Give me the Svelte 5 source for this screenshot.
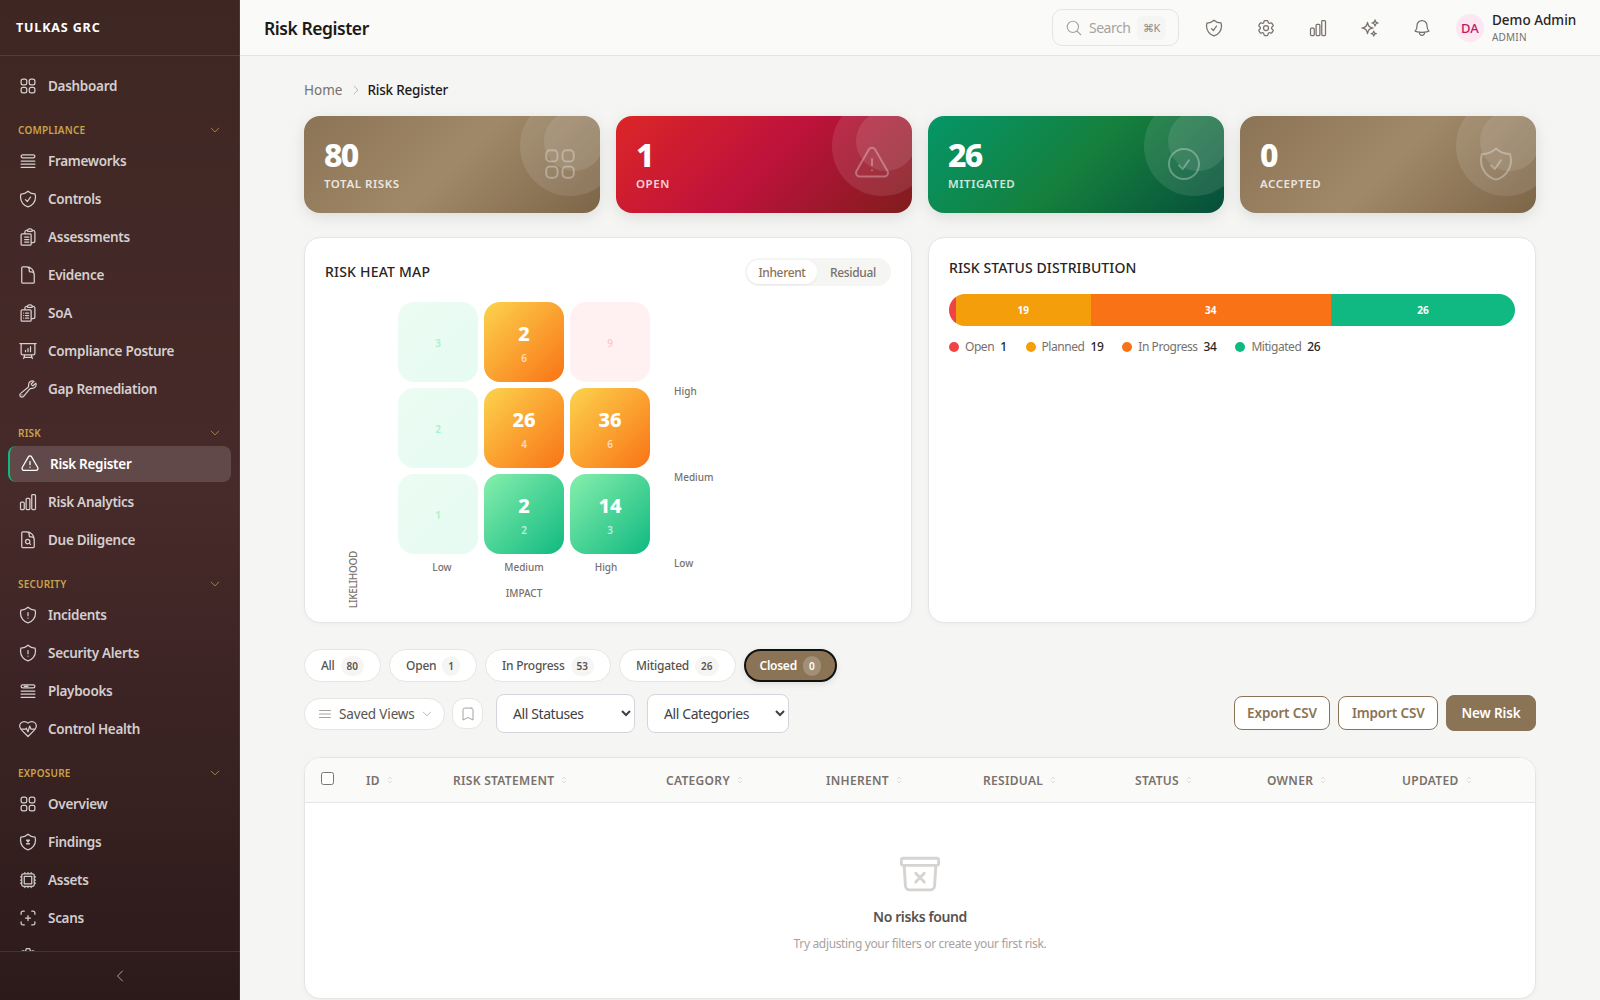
<script>
  const P = {
    squares: 'M3.75 6A2.25 2.25 0 0 1 6 3.75h2.25A2.25 2.25 0 0 1 10.5 6v2.25a2.25 2.25 0 0 1-2.25 2.25H6a2.25 2.25 0 0 1-2.25-2.25V6ZM3.75 15.75A2.25 2.25 0 0 1 6 13.5h2.25a2.25 2.25 0 0 1 2.25 2.25V18a2.25 2.25 0 0 1-2.25 2.25H6A2.25 2.25 0 0 1 3.75 18v-2.25ZM13.5 6a2.25 2.25 0 0 1 2.25-2.25H18A2.25 2.25 0 0 1 20.25 6v2.25A2.25 2.25 0 0 1 18 10.5h-2.25a2.25 2.25 0 0 1-2.25-2.25V6ZM13.5 15.75a2.25 2.25 0 0 1 2.25-2.25H18a2.25 2.25 0 0 1 2.25 2.25V18A2.25 2.25 0 0 1 18 20.25h-2.25A2.25 2.25 0 0 1 13.5 18v-2.25Z',
    queue: 'M3.75 12h16.5m-16.5 3.75h16.5M3.75 19.5h16.5M5.625 4.5h12.75a1.875 1.875 0 0 1 0 3.75H5.625a1.875 1.875 0 0 1 0-3.75Z',
    playbook: 'M3.75 12h16.5m-16.5 3.75h16.5M3.75 19.5h16.5M5.625 4.5h12.75a1.875 1.875 0 0 1 0 3.75H5.625a1.875 1.875 0 0 1 0-3.75ZM7.5 6.4h4.5',
    shieldCheck: 'M9 12.75 11.25 15 15 9.75m-3-7.036A11.959 11.959 0 0 1 3.598 6 11.99 11.99 0 0 0 3 9.749c0 5.592 3.824 10.29 9 11.623 5.176-1.332 9-6.03 9-11.622 0-1.31-.21-2.571-.598-3.751h-.152c-3.196 0-6.1-1.248-8.25-3.285Z',
    clipLines: 'M8 12h5M8 15h5M8 18h5m2.75.75H18a2.25 2.25 0 0 0 2.25-2.25V6.108c0-1.135-.845-2.098-1.976-2.192a48.424 48.424 0 0 0-1.123-.08m-5.801 0c-.065.21-.1.433-.1.664 0 .414.336.75.75.75h4.5a.75.75 0 0 0 .75-.75 2.25 2.25 0 0 0-.1-.664m-5.8 0A2.251 2.251 0 0 1 13.5 2.25H15c1.012 0 1.867.668 2.15 1.586m-5.8 0c-.376.023-.75.05-1.124.08C9.095 4.01 8.25 4.973 8.25 6.108V8.25m0 0H4.875c-.621 0-1.125.504-1.125 1.125v11.25c0 .621.504 1.125 1.125 1.125h9.75c.621 0 1.125-.504 1.125-1.125V9.375c0-.621-.504-1.125-1.125-1.125H8.25Z',
    clipList: 'M9 12h3.75M9 15h3.75M9 18h3.75m3 .75H18a2.25 2.25 0 0 0 2.25-2.25V6.108c0-1.135-.845-2.098-1.976-2.192a48.424 48.424 0 0 0-1.123-.08m-5.801 0c-.065.21-.1.433-.1.664 0 .414.336.75.75.75h4.5a.75.75 0 0 0 .75-.75 2.25 2.25 0 0 0-.1-.664m-5.8 0A2.251 2.251 0 0 1 13.5 2.25H15c1.012 0 1.867.668 2.15 1.586m-5.8 0c-.376.023-.75.05-1.124.08C9.095 4.01 8.25 4.973 8.25 6.108V8.25m0 0H4.875c-.621 0-1.125.504-1.125 1.125v11.25c0 .621.504 1.125 1.125 1.125h9.75c.621 0 1.125-.504 1.125-1.125V9.375c0-.621-.504-1.125-1.125-1.125H8.25ZM6.75 12h.008v.008H6.75V12Zm0 3h.008v.008H6.75V15Zm0 3h.008v.008H6.75V18Z',
    document: 'M19.5 14.25v-2.625a3.375 3.375 0 0 0-3.375-3.375h-1.5A1.125 1.125 0 0 1 13.5 7.125v-1.5a3.375 3.375 0 0 0-3.375-3.375H8.25m2.25 0H5.625c-.621 0-1.125.504-1.125 1.125v17.25c0 .621.504 1.125 1.125 1.125h12.75c.621 0 1.125-.504 1.125-1.125V11.25a9 9 0 0 0-9-9Z',
    presentation: 'M3.75 3v11.25A2.25 2.25 0 0 0 6 16.5h2.25M3.75 3h-1.5m1.5 0h16.5m0 0h1.5m-1.5 0v11.25A2.25 2.25 0 0 1 18 16.5h-2.25m-7.5 0h7.5m-7.5 0-1 3m8.5-3 1 3m0 0 .5 1.5m-.5-1.5h-9.5m0 0-.5 1.5M9 11.25v1.5M12 9v3.75m3-6v6',
    wrench: 'M21.75 6.75a4.5 4.5 0 0 1-4.884 4.484c-1.076-.091-2.264.071-2.95.904l-7.152 8.684a2.548 2.548 0 1 1-3.586-3.586l8.684-7.152c.833-.686.995-1.874.904-2.95a4.5 4.5 0 0 1 6.336-4.486l-3.276 3.276a3.004 3.004 0 0 0 2.25 2.25l3.276-3.276c.256.565.398 1.192.398 1.852ZM4.867 19.125h.008v.008h-.008v-.008Z',
    triangle: 'M12 9v3.75m-9.303 3.376c-.866 1.5.217 3.374 1.948 3.374h14.71c1.73 0 2.813-1.874 1.948-3.374L13.949 3.378c-.866-1.5-3.032-1.5-3.898 0L2.697 16.126ZM12 15.75h.007v.008H12v-.008Z',
    chart: 'M3 13.125C3 12.504 3.504 12 4.125 12h2.25c.621 0 1.125.504 1.125 1.125v6.75C7.5 20.496 6.996 21 6.375 21h-2.25A1.125 1.125 0 0 1 3 19.875v-6.75ZM9.75 8.625c0-.621.504-1.125 1.125-1.125h2.25c.621 0 1.125.504 1.125 1.125v11.25c0 .621-.504 1.125-1.125 1.125h-2.25a1.125 1.125 0 0 1-1.125-1.125V8.625ZM16.5 4.125c0-.621.504-1.125 1.125-1.125h2.25C20.496 3 21 3.504 21 4.125v15.75c0 .621-.504 1.125-1.125 1.125h-2.25a1.125 1.125 0 0 1-1.125-1.125V4.125Z',
    docSearch: 'M19.5 14.25v-2.625a3.375 3.375 0 0 0-3.375-3.375h-1.5A1.125 1.125 0 0 1 13.5 7.125v-1.5a3.375 3.375 0 0 0-3.375-3.375H8.25m5.231 13.481L15 17.25m-4.5-15H5.625c-.621 0-1.125.504-1.125 1.125v16.5c0 .621.504 1.125 1.125 1.125h12.75c.621 0 1.125-.504 1.125-1.125V11.25a9 9 0 0 0-9-9Zm3.75 11.625a2.625 2.625 0 1 1-5.25 0 2.625 2.625 0 0 1 5.25 0Z',
    shieldExcl: 'M12 9v3.75m0-10.036A11.959 11.959 0 0 1 3.598 6 11.99 11.99 0 0 0 3 9.75c0 5.592 3.824 10.29 9 11.622 5.176-1.332 9-6.03 9-11.622 0-1.31-.21-2.57-.598-3.75h-.152c-3.196 0-6.1-1.25-8.25-3.286Zm0 13.036h.008v.008H12v-.008Z',
    heartPulse: 'M19 14c1.49-1.46 3-3.21 3-5.5A5.5 5.5 0 0 0 16.5 3c-1.76 0-3 .5-4.5 2-1.5-1.5-2.74-2-4.5-2A5.5 5.5 0 0 0 2 8.5c0 2.3 1.5 4.05 3 5.5l7 7ZM3.22 12H9.5l.5-1 2 4.5 2-7 1.5 3.5h5.27',
    shieldBug: 'M12 2.714A11.959 11.959 0 0 1 3.598 6 11.99 11.99 0 0 0 3 9.75c0 5.592 3.824 10.29 9 11.622 5.176-1.332 9-6.03 9-11.622 0-1.31-.21-2.57-.598-3.75h-.152c-3.196 0-6.1-1.25-8.25-3.286ZM10.2 9.8h3.6M10.2 14.2h3.6M10.2 9.8l3.6 4.4M13.8 9.8l-3.6 4.4',
    cpu: 'M8.25 3v1.5M4.5 8.25H3m18 0h-1.5M4.5 12H3m18 0h-1.5m-15 3.75H3m18 0h-1.5M8.25 19.5V21M12 3v1.5m0 15V21m3.75-18v1.5m0 15V21m-9-1.5h10.5a2.25 2.25 0 0 0 2.25-2.25V6.75a2.25 2.25 0 0 0-2.25-2.25H6.75A2.25 2.25 0 0 0 4.5 6.75v10.5a2.25 2.25 0 0 0 2.25 2.25Zm.75-12h9v9h-9v-9Z',
    scan: 'M7.5 3.75H6A2.25 2.25 0 0 0 3.75 6v1.5M16.5 3.75H18A2.25 2.25 0 0 1 20.25 6v1.5m0 9V18A2.25 2.25 0 0 1 18 20.25h-1.5m-9 0H6A2.25 2.25 0 0 1 3.75 18v-1.5M15 12H9m3-3v6',
    cog: 'M9.594 3.94c.09-.542.56-.94 1.11-.94h2.593c.55 0 1.02.398 1.11.94l.213 1.281c.063.374.313.686.645.87.074.04.147.083.22.127.325.196.72.257 1.075.124l1.217-.456a1.125 1.125 0 0 1 1.37.49l1.296 2.247a1.125 1.125 0 0 1-.26 1.431l-1.003.827c-.293.241-.438.613-.43.992a7.723 7.723 0 0 1 0 .255c-.008.378.137.75.43.991l1.004.827c.424.35.534.955.26 1.43l-1.298 2.247a1.125 1.125 0 0 1-1.369.491l-1.217-.456c-.355-.133-.75-.072-1.076.124a6.47 6.47 0 0 1-.22.128c-.331.183-.581.495-.644.869l-.213 1.281c-.09.543-.56.94-1.11.94h-2.594c-.55 0-1.019-.398-1.11-.94l-.213-1.281c-.062-.374-.312-.686-.644-.87a6.52 6.52 0 0 1-.22-.127c-.325-.196-.72-.257-1.076-.124l-1.217.456a1.125 1.125 0 0 1-1.369-.49l-1.297-2.247a1.125 1.125 0 0 1 .26-1.431l1.004-.827c.292-.24.437-.613.43-.991a6.932 6.932 0 0 1 0-.255c.007-.38-.138-.751-.43-.992l-1.004-.827a1.125 1.125 0 0 1-.26-1.43l1.297-2.247a1.125 1.125 0 0 1 1.37-.491l1.216.456c.356.133.751.072 1.076-.124.072-.044.146-.086.22-.128.332-.183.582-.495.644-.869l.214-1.28ZM15 12a3 3 0 1 1-6 0 3 3 0 0 1 6 0Z',
    sparkles: 'M9.813 15.904 9 18.75l-.813-2.846a4.5 4.5 0 0 0-3.09-3.09L2.25 12l2.846-.813a4.5 4.5 0 0 0 3.09-3.09L9 5.25l.813 2.846a4.5 4.5 0 0 0 3.09 3.09L15.75 12l-2.846.813a4.5 4.5 0 0 0-3.09 3.09ZM18.259 8.715 18 9.75l-.259-1.035a3.375 3.375 0 0 0-2.455-2.456L14.25 6l1.036-.259a3.375 3.375 0 0 0 2.455-2.456L18 2.25l.259 1.035a3.375 3.375 0 0 0 2.456 2.456L21.75 6l-1.035.259a3.375 3.375 0 0 0-2.456 2.456ZM16.894 20.567 16.5 21.75l-.394-1.183a2.25 2.25 0 0 0-1.423-1.423L13.5 18.75l1.183-.394a2.25 2.25 0 0 0 1.423-1.423l.394-1.183.394 1.183a2.25 2.25 0 0 0 1.423 1.423l1.183.394-1.183.394a2.25 2.25 0 0 0-1.423 1.423Z',
    bell: 'M14.857 17.082a23.848 23.848 0 0 0 5.454-1.31A8.967 8.967 0 0 1 18 9.75V9A6 6 0 0 0 6 9v.75a8.967 8.967 0 0 1-2.312 6.022c1.733.64 3.56 1.085 5.455 1.31m5.714 0a24.255 24.255 0 0 1-5.714 0m5.714 0a3 3 0 1 1-5.714 0',
    search: 'm21 21-5.197-5.197m0 0A7.5 7.5 0 1 0 5.196 5.196a7.5 7.5 0 0 0 10.607 10.607Z',
    checkCircle: 'M9 12.75 11.25 15 15 9.75M21 12a9 9 0 1 1-18 0 9 9 0 0 1 18 0Z',
    archiveX: 'm20.25 7.5-.625 10.632a2.25 2.25 0 0 1-2.247 2.118H6.622a2.25 2.25 0 0 1-2.247-2.118L3.75 7.5m6 4.125 2.25 2.25m0 0 2.25 2.25M12 13.875l2.25-2.25M12 13.875l-2.25 2.25M3.375 7.5h17.25c.621 0 1.125-.504 1.125-1.125v-1.5c0-.621-.504-1.125-1.125-1.125H3.375c-.621 0-1.125.504-1.125 1.125v1.5c0 .621.504 1.125 1.125 1.125Z',
    bookmark: 'M17.593 3.322c1.1.128 1.907 1.077 1.907 2.185V21L12 17.25 4.5 21V5.507c0-1.108.806-2.057 1.907-2.185a48.507 48.507 0 0 1 11.186 0Z',
    bars: 'M3.75 6.75h16.5M3.75 12h16.5m-16.5 5.25h16.5',
    down: 'm19.5 8.25-7.5 7.5-7.5-7.5',
    left: 'M15.75 19.5 8.25 12l7.5-7.5',
    right: 'm8.25 4.5 7.5 7.5-7.5 7.5',
    updown: 'M8.25 15 12 18.75 15.75 15m-7.5-6L12 5.25 15.75 9'
  };

  const nav = [
    { items: [{ t: 'Dashboard', i: 'squares' }] },
    { title: 'Compliance', items: [
      { t: 'Frameworks', i: 'queue' }, { t: 'Controls', i: 'shieldCheck' }, { t: 'Assessments', i: 'clipLines' },
      { t: 'Evidence', i: 'document' }, { t: 'SoA', i: 'clipList' }, { t: 'Compliance Posture', i: 'presentation' },
      { t: 'Gap Remediation', i: 'wrench' } ] },
    { title: 'Risk', items: [
      { t: 'Risk Register', i: 'triangle', active: true }, { t: 'Risk Analytics', i: 'chart' }, { t: 'Due Diligence', i: 'docSearch' } ] },
    { title: 'Security', items: [
      { t: 'Incidents', i: 'shieldExcl' }, { t: 'Security Alerts', i: 'shieldExcl' }, { t: 'Playbooks', i: 'playbook' }, { t: 'Control Health', i: 'heartPulse' } ] },
    { title: 'Exposure', items: [
      { t: 'Overview', i: 'squares' }, { t: 'Findings', i: 'shieldBug' }, { t: 'Assets', i: 'cpu' }, { t: 'Scans', i: 'scan' }, { t: '', i: 'cog' } ] }
  ];

  const stats = [
    { n: 80, l: 'Total Risks', c: 'brown', i: 'squares' },
    { n: 1, l: 'Open', c: 'red', i: 'triangle' },
    { n: 26, l: 'Mitigated', c: 'green', i: 'checkCircle' },
    { n: 0, l: 'Accepted', c: 'brown', i: 'shieldCheck' }
  ];

  const cells = [
    { k: 'fade-g', s: 3 }, { k: 'orange', b: 2, s: 6 }, { k: 'fade-r', s: 9 },
    { k: 'fade-g', s: 2 }, { k: 'orange', b: 26, s: 4 }, { k: 'orange', b: 36, s: 6 },
    { k: 'fade-g', s: 1 }, { k: 'green', b: 2, s: 2 }, { k: 'green', b: 14, s: 3 }
  ];

  const segs = [
    { v: 1, c: '#ef4444', l: 'Open' },
    { v: 19, c: '#f59e0b', l: 'Planned' },
    { v: 34, c: '#f97316', l: 'In Progress' },
    { v: 26, c: '#10b981', l: 'Mitigated' }
  ];

  const pills = [
    { l: 'All', n: 80 }, { l: 'Open', n: 1 }, { l: 'In Progress', n: 53 }, { l: 'Mitigated', n: 26 }, { l: 'Closed', n: 0, on: true }
  ];

  const cols = ['ID', 'Risk Statement', 'Category', 'Inherent', 'Residual', 'Status', 'Owner', 'Updated'];
</script>

{#snippet icon(name, size = 20, sw = 1.5)}
  <svg class="ic" width={size} height={size} viewBox="0 0 24 24" fill="none" stroke="currentColor" stroke-width={sw} stroke-linecap="round" stroke-linejoin="round" aria-hidden="true"><path d={P[name]} /></svg>
{/snippet}

<div class="app">
  <aside class="side">
    <div class="brand">TULKAS GRC</div>
    <nav class="nav">
      {#each nav as g}
        {#if g.title}
          <div class="sec"><span>{g.title}</span>{@render icon('down', 12)}</div>
        {/if}
        {#each g.items as it}
          <div class="item" class:active={it.active}>
            {@render icon(it.i, 20)}
            {#if it.t}<span>{it.t}</span>{/if}
          </div>
        {/each}
      {/each}
    </nav>
    <div class="collapse">{@render icon('left', 16)}</div>
  </aside>

  <div class="col">
    <header class="top">
      <h1>Risk Register</h1>
      <div class="search">
        {@render icon('search', 18)}
        <span class="s-t">Search</span>
        <span class="kbd">⌘K</span>
      </div>
      <div class="tools">
        {#each ['shieldCheck', 'cog', 'chart', 'sparkles', 'bell'] as t}
          <span class="tool">{@render icon(t, 20)}</span>
        {/each}
      </div>
      <div class="user">
        <span class="avatar">DA</span>
        <div class="who"><b>Demo Admin</b><small>ADMIN</small></div>
      </div>
    </header>

    <main class="main">
      <div class="crumb"><span>Home</span>{@render icon('right', 12)}<b>Risk Register</b></div>

      <section class="stats">
        {#each stats as s}
          <div class="stat {s.c}">
            <div class="num">{s.n}</div>
            <div class="lab">{s.l}</div>
            <span class="si">{@render icon(s.i, 40, 1.2)}</span>
          </div>
        {/each}
      </section>

      <section class="charts">
        <div class="card">
          <div class="chead">
            <h2>Risk Heat Map</h2>
            <div class="toggle"><span class="on">Inherent</span><span>Residual</span></div>
          </div>
          <div class="heat">
            <div class="yaxis">LIKELIHOOD</div>
            <div class="matrix">
              <div class="grid">
                {#each cells as c}
                  <div class="cell {c.k}">
                    {#if c.b}<strong>{c.b}</strong>{/if}
                    <em>{c.s}</em>
                  </div>
                {/each}
              </div>
              <div class="xlabels"><span>Low</span><span>Medium</span><span>High</span></div>
              <div class="xaxis">IMPACT</div>
            </div>
            <div class="ylabels"><span>High</span><span>Medium</span><span>Low</span></div>
          </div>
        </div>

        <div class="card">
          <h2 class="dist-t">Risk Status Distribution</h2>
          <div class="bar">
            {#each segs as s}
              <div class="seg" style="flex:{s.v} 0 0;background:{s.c}">{s.v > 1 ? s.v : ''}</div>
            {/each}
          </div>
          <div class="legend">
            {#each segs as s}
              <div class="lg"><i style="background:{s.c}"></i><span>{s.l}</span><b>{s.v}</b></div>
            {/each}
          </div>
        </div>
      </section>

      <div class="pills">
        {#each pills as p}
          <div class="pill" class:on={p.on}>{p.l}<span class="bdg">{p.n}</span></div>
        {/each}
      </div>

      <div class="tb">
        <div class="saved">{@render icon('bars', 16)}<span>Saved Views</span>{@render icon('down', 12)}</div>
        <div class="bm">{@render icon('bookmark', 16)}</div>
        <select class="sel s1"><option>All Statuses</option></select>
        <select class="sel s2"><option>All Categories</option></select>
        <div class="acts">
          <button class="btn">Export CSV</button>
          <button class="btn">Import CSV</button>
          <button class="btn pri">New Risk</button>
        </div>
      </div>

      <section class="table">
        <div class="thead">
          <div class="cb"><input type="checkbox" /></div>
          {#each cols as c}
            <div class="th">{c}{@render icon('updown', 10)}</div>
          {/each}
        </div>
        <div class="empty">
          {@render icon('archiveX', 46)}
          <h3>No risks found</h3>
          <p>Try adjusting your filters or create your first risk.</p>
        </div>
      </section>
    </main>
  </div>
</div>

<style>
  :global(body) { margin: 0; background: #f5f5f3; }
  .app {
    display: flex; height: 1000px; overflow: hidden;
    font-family: "Noto Sans", "Open Sans", sans-serif; color: #292524;
  }
  .ic { display: block; flex: none; }

  .side {
    width: 240px; flex: none; display: flex; flex-direction: column; color: rgba(255,255,255,.78);
    background: linear-gradient(180deg, #3e2723 0%, #472a2a 50%, #2c1a1a 100%);
    box-shadow: inset -1px 0 0 rgba(255,255,255,.08);
  }
  .brand {
    height: 55px; box-sizing: content-box; display: flex; align-items: center; padding-left: 16px;
    border-bottom: 1px solid rgba(255,255,255,.1);
    color: #fff; font-size: 12.5px; font-weight: 700; letter-spacing: .85px; flex: none;
  }
  .nav { flex: 1; min-height: 0; overflow: hidden; padding: 12px 9px 0 8px; }
  .item {
    height: 36px; margin-bottom: 2px; display: flex; align-items: center; gap: 10px; padding-left: 10px;
    font-size: 13.5px; font-weight: 600; letter-spacing: -.3px; border-radius: 8px; box-sizing: border-box;
  }
  .item.active {
    background: rgba(255,255,255,.15); color: #fff; border-left: 2px solid #10b981;
  }
  .sec {
    margin: 12px 0 0; height: 27px; display: flex; align-items: center; justify-content: space-between;
    padding: 0 10px; color: #c9a24b; font-size: 10px; font-weight: 600; letter-spacing: .2px; text-transform: uppercase;
  }
  .collapse {
    height: 48px; flex: none; border-top: 1px solid rgba(255,255,255,.1);
    display: flex; align-items: center; justify-content: center; color: rgba(255,255,255,.6);
  }

  .col { flex: 1; min-width: 0; display: flex; flex-direction: column; }
  .top {
    height: 55px; box-sizing: content-box; flex: none; display: flex; align-items: center; padding: 0 24px;
    background: #fafaf8; border-bottom: 1px solid #e7e5e4;
  }
  .top h1 { margin: 0 auto 0 0; font-size: 17.5px; font-weight: 600; letter-spacing: -.45px; color: #1c1917; }
  .search {
    width: 127px; height: 37px; box-sizing: border-box; border: 1px solid #e7e5e4; border-radius: 10px;
    display: flex; align-items: center; gap: 6px; padding: 0 12px; color: #a8a29e; background: #fafaf8;
    margin-right: 17px;
  }
  .s-t { font-size: 14px; letter-spacing: -.5px; white-space: nowrap; }
  .kbd {
    margin-left: auto; flex: none; height: 24px; width: 29px; border-radius: 6px; background: #f5f5f3; display: flex;
    align-items: center; justify-content: center; font-size: 11px; color: #8f8a84;
  }
  .tools { display: flex; gap: 16px; margin-right: 16px; }
  .tool { width: 36px; height: 36px; display: flex; align-items: center; justify-content: center; color: #78716c; }
  .user { display: flex; align-items: center; gap: 8px; width: 120px; }
  .avatar {
    width: 28px; height: 28px; border-radius: 50%; background: #fce7f3; color: #be185d; font-size: 13px; font-weight: 500;
    display: flex; align-items: center; justify-content: center; flex: none;
  }
  .who { display: flex; flex-direction: column; white-space: nowrap; }
  .who b { font-size: 13.5px; font-weight: 500; line-height: 18px; color: #292524; }
  .who small { font-size: 10px; line-height: 14px; color: #78716c; letter-spacing: .2px; margin-top: 1px; }

  .main { flex: 1; min-height: 0; padding: 24px 64px 0; box-sizing: border-box; }
  .crumb { display: flex; align-items: center; gap: 8px; height: 20px; margin-bottom: 16px; font-size: 13.5px; color: #78716c; }
  .crumb :global(.ic) { color: #a8a29e; }
  .crumb b { font-weight: 500; color: #1c1917; letter-spacing: -.2px; margin-left: -3px; }

  .stats { display: grid; grid-template-columns: repeat(4, 1fr); gap: 16px; margin-bottom: 24px; }
  .stat {
    height: 97px; box-sizing: border-box; padding: 20px 20px 0; border-radius: 16px; color: #fff; position: relative; overflow: hidden;
    box-shadow: 0 4px 16px rgba(0,0,0,.1);
  }
  .stat::before, .stat::after { content: ''; position: absolute; border-radius: 50%; background: rgba(255,255,255,.1); }
  .stat::before { width: 100px; height: 100px; top: -20px; right: -20px; }
  .stat::after { width: 60px; height: 60px; top: -5px; right: -4px; }
  .brown { background: linear-gradient(135deg, #8b7355 0%, #a08968 50%, #7d6548 100%); }
  .red { background: linear-gradient(135deg, #dc2626 0%, #be123c 50%, #7f1d1d 100%); }
  .green { background: linear-gradient(135deg, #059669 0%, #15803d 50%, #064e3b 100%); }
  .num { font-size: 32px; font-weight: 800; line-height: 38px; letter-spacing: -1.8px; }
  .lab { margin-top: 2px; font-size: 11.5px; font-weight: 600; line-height: 16px; letter-spacing: .55px; text-transform: uppercase; opacity: .8; }
  .si { position: absolute; right: 20px; top: 28px; opacity: .3; }

  .charts { display: grid; grid-template-columns: 1fr 1fr; gap: 16px; margin-bottom: 26px; }
  .card {
    height: 386px; box-sizing: border-box; background: #fff; border: 1px solid #e7e5e4; border-radius: 16px;
    padding: 20px 20px 14px; box-shadow: 0 1px 4px rgba(0,0,0,.04);
  }
  .chead { display: flex; align-items: center; justify-content: space-between; height: 28px; margin-bottom: 16px; }
  .chead h2 { padding-bottom: 2px; }
  h2 { margin: 0; font-size: 14px; font-weight: 500; letter-spacing: .2px; text-transform: uppercase; color: #292524; }
  .toggle {
    width: 146px; height: 28px; box-sizing: border-box; border-radius: 14px; background: #f5f5f3; padding: 2px; display: flex;
    font-size: 12px; color: #78716c; font-weight: 500; letter-spacing: -.35px;
  }
  .toggle span { flex: 1; display: flex; align-items: center; justify-content: center; border-radius: 12px; }
  .toggle .on { background: #fff; color: #8b7355; flex: none; width: 70px; box-shadow: 0 1px 2px rgba(0,0,0,.06); }

  .heat { display: flex; height: 306px; }
  .yaxis {
    writing-mode: vertical-rl; transform: rotate(180deg); align-self: flex-end; font-size: 10px; line-height: 12px; color: #78716c;
    font-weight: 500; margin-left: 22px; letter-spacing: -.3px;
  }
  .matrix { margin-left: 39px; width: 252px; }
  .grid { display: grid; grid-template-columns: repeat(3, 80px); grid-auto-rows: 80px; gap: 6px; }
  .cell {
    border-radius: 16px; display: flex; flex-direction: column; align-items: center; justify-content: center; color: #fff;
    padding-top: 2px; box-sizing: border-box;
  }
  .cell strong { font-size: 20px; font-weight: 800; line-height: 26px; }
  .cell em { font-style: normal; font-size: 10px; line-height: 14px; opacity: .65; font-weight: 600; margin-top: 4px; }
  .cell.orange { background: linear-gradient(135deg, #fcd34d, #f97316); }
  .cell.green { background: linear-gradient(135deg, #86efac, #10b981); }
  .cell.fade-g { background: linear-gradient(135deg, #ecfcf2, #e6fbf2); color: #a7f3c8; }
  .cell.fade-r { background: #fff1f1; color: #fecaca; }
  .cell.fade-g em, .cell.fade-r em { opacity: 1; margin-top: 0; }
  .xlabels { display: grid; grid-template-columns: repeat(3, 82px); justify-content: center; margin-top: 6px; font-size: 10px; line-height: 14px; color: #78716c; text-align: center; font-weight: 500; }
  .xaxis { text-align: center; margin-top: 12px; font-size: 10px; line-height: 14px; color: #78716c; font-weight: 500; }
  .ylabels { margin: 83px 0 0 24px; display: flex; flex-direction: column; font-size: 10px; line-height: 12px; color: #78716c; font-weight: 500; }
  .ylabels span { height: 86px; flex: none; }

  .dist-t { line-height: 20px; margin-bottom: 16px; letter-spacing: .1px; }
  .bar { display: flex; height: 32px; border-radius: 16px; overflow: hidden; }
  .seg { display: flex; align-items: center; justify-content: center; color: #fff; font-size: 10px; font-weight: 700; }
  .legend { display: flex; gap: 19px; margin-top: 13px; font-size: 12px; line-height: 16px; color: #78716c; letter-spacing: -.45px; }
  .lg { display: flex; align-items: center; }
  .lg i { width: 10px; height: 10px; border-radius: 50%; margin-right: 6px; }
  .lg b { font-weight: 500; color: #292524; margin-left: 6px; }

  .pills { display: flex; gap: 8px; margin-bottom: 12px; }
  .pill {
    height: 33px; box-sizing: border-box; padding: 0 16px; display: flex; align-items: center; gap: 6px; background: #fff;
    border: 1px solid #e7e5e4; border-radius: 17px; font-size: 12px; font-weight: 500; letter-spacing: -.25px; color: #57534e;
  }
  .bdg {
    min-width: 17px; height: 20px; padding: 0 6px; box-sizing: border-box; border-radius: 10px; background: #f5f5f3; color: #57534e; display: flex;
    align-items: center; justify-content: center; font-size: 10px; font-weight: 600; letter-spacing: 0;
  }
  .pill.on { background: #8b7355; border: 2px solid #111; color: #fff; font-weight: 600; padding: 0 14px; box-shadow: 0 2px 6px rgba(0,0,0,.1); }
  .pill.on .bdg { background: rgba(255,255,255,.2); color: #fff; }

  .tb { display: flex; align-items: center; margin-bottom: 24px; height: 39px; }
  .saved {
    width: 141px; height: 32px; box-sizing: border-box; background: #fff; border: 1px solid #e7e5e4; border-radius: 16px; display: flex;
    align-items: center; gap: 6px; padding: 0 12px; font-size: 13.5px; letter-spacing: -.15px; color: #57534e; margin-right: 7px; white-space: nowrap;
  }
  .saved :global(.ic) { color: #a8a29e; }
  .bm {
    width: 31px; height: 31px; box-sizing: border-box; background: #fff; border: 1px solid #e7e5e4; border-radius: 12px;
    display: flex; align-items: center; justify-content: center; color: #a8a29e; margin-right: 13px;
  }
  .sel {
    height: 39px; box-sizing: border-box; background: #fff; border: 1px solid #d6d3dc; border-radius: 8px; padding: 0 4px 0 12px;
    font: 400 14px "Noto Sans", sans-serif; letter-spacing: -.4px; color: #3f3f46;
  }
  .s1 { width: 139px; margin-right: 12px; }
  .s2 { width: 142px; }
  .acts { margin-left: auto; display: flex; gap: 8px; align-items: center; margin-top: -2px; }
  .btn {
    height: 34px; box-sizing: border-box; padding: 0 12.5px; background: #fff; border: 1px solid #8b7355; color: #8b7355; border-radius: 8px;
    font: 600 13.5px "Noto Sans", sans-serif; letter-spacing: -.15px;
  }
  .btn.pri { height: 36px; background: #8b7355; color: #fff; padding: 0 14.5px; }

  .table {
    height: 242px; box-sizing: border-box; background: #fff; border: 1px solid #e7e5e4; border-radius: 16px; overflow: hidden;
    box-shadow: 0 1px 4px rgba(0,0,0,.04);
  }
  .thead {
    height: 45px; box-sizing: border-box; background: #fafaf8; border-bottom: 1px solid #e7e5e4; display: grid;
    grid-template-columns: 61px 87px 213px 160px 157px 152px 132px 135px 1fr; align-items: center;
  }
  .cb { padding-left: 16px; display: flex; }
  .cb input { margin: 0 0 4px; width: 13px; height: 13px; }
  .th {
    display: flex; align-items: center; gap: 5px; font-size: 12px; font-weight: 600; letter-spacing: .3px; text-transform: uppercase; color: #78716c;
  }
  .th :global(.ic) { color: #c8c5c0; }
  .empty { display: flex; flex-direction: column; align-items: center; padding-top: 48px; color: #d6d3d1; }
  .empty h3 { margin: 10px 0 0; font-size: 14px; line-height: 20px; font-weight: 600; letter-spacing: -.4px; color: #57534e; }
  .empty p { margin: 9px 0 0; font-size: 12px; line-height: 16px; letter-spacing: -.35px; color: #a8a29e; }
</style>
